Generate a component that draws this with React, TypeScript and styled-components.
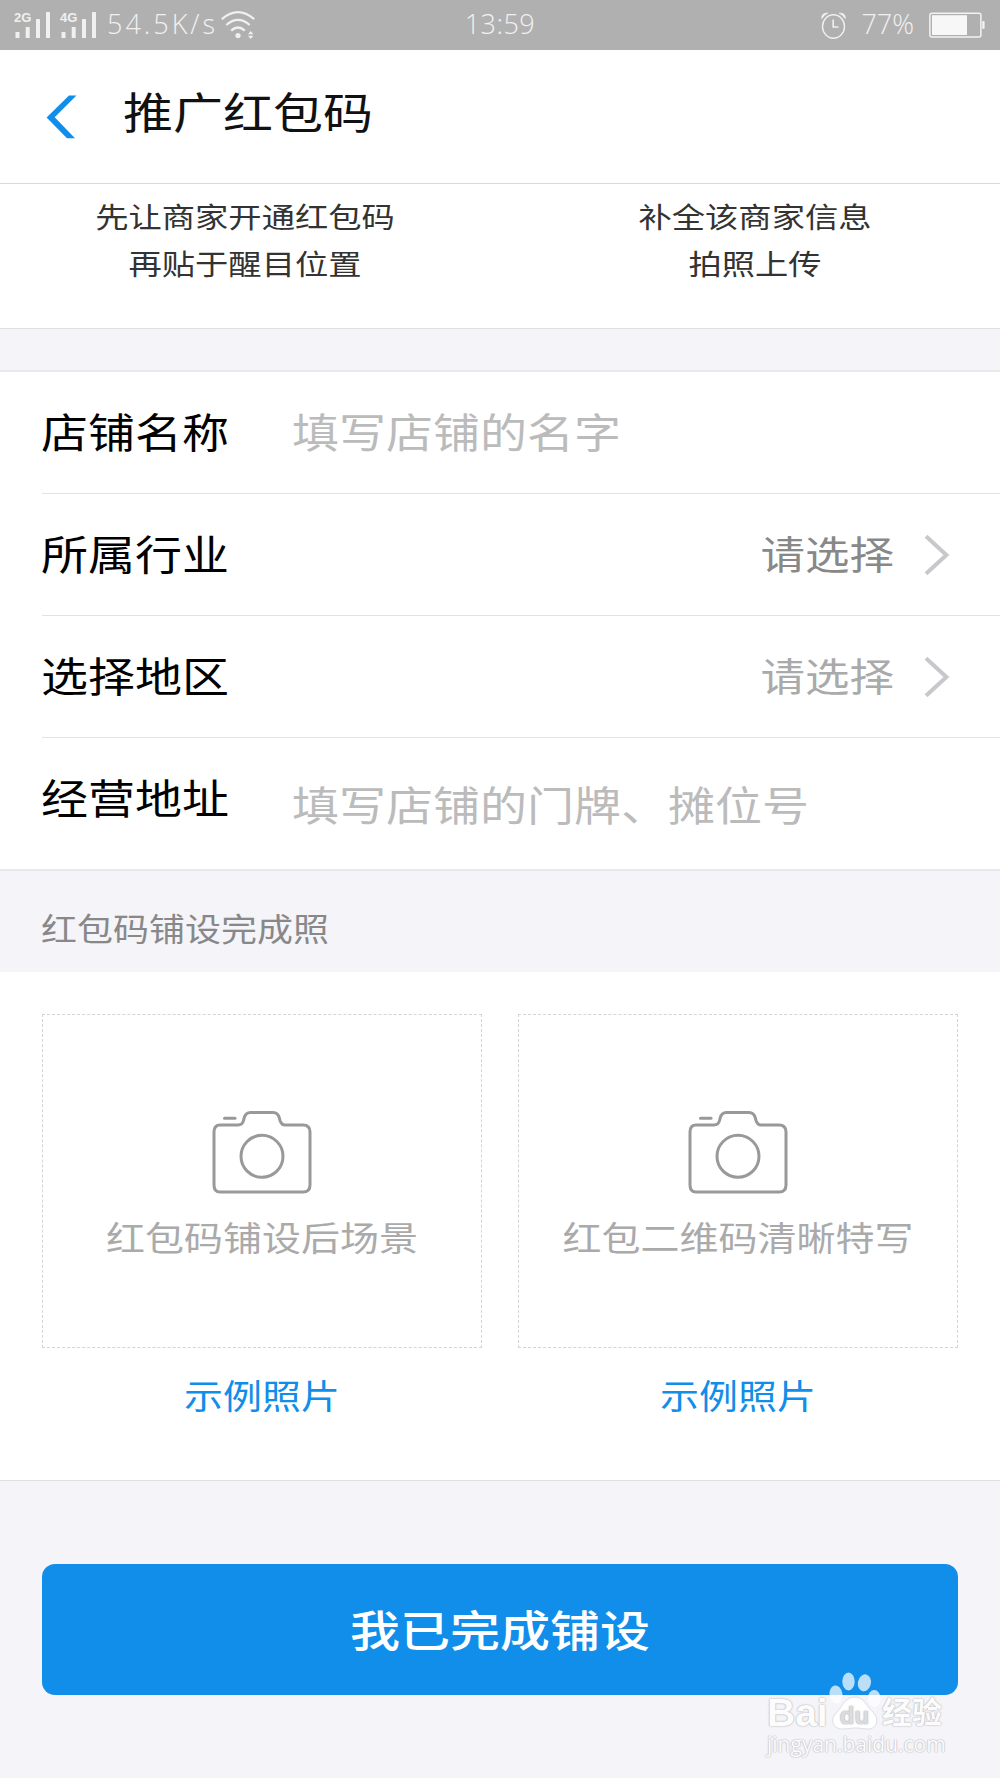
import React from "react";
import styled, { createGlobalStyle } from "styled-components";

const GlobalStyle = createGlobalStyle`
  * { box-sizing: border-box; }
  body {
    margin: 0;
    background: #f4f4f9;
    font-family: "Liberation Sans", "Noto Sans CJK SC", sans-serif;
  }
`;

const Screen = styled.main`
  position: relative;
  width: 1000px;
  height: 1778px;
  overflow: hidden;
  display: flex;
  flex-direction: column;
  background: #f4f4f9;
`;

/* Clerical-style lettering: wide and a little flat. */
const Lettering = styled.span<{ $size: number; $color: string; $weight?: number }>`
  display: block;
  font-family: "Noto Sans CJK SC", sans-serif;
  font-size: ${(p) => p.$size}px;
  line-height: 1;
  color: ${(p) => p.$color};
  font-weight: ${(p) => p.$weight ?? 400};
  white-space: nowrap;
  transform: translateY(-0.04em) scaleY(0.87);
`;

const StatusBar = styled.header`
  height: 50px;
  flex: none;
  display: grid;
  grid-template-columns: 1fr auto 1fr;
  align-items: center;
  padding: 0 15px;
  background: #b0b0b0;
  color: #f0f0f0;
`;

const StatusGroup = styled.div<{ $end?: boolean }>`
  display: flex;
  align-items: center;
  justify-content: ${(p) => (p.$end ? "flex-end" : "flex-start")};
  height: 50px;
`;

const StatusText = styled.span<{ $spacing?: number; $margin?: string }>`
  font-family: "Open Sans", Roboto, sans-serif;
  font-weight: 300;
  font-size: 27px;
  line-height: 48px;
  height: 50px;
  letter-spacing: ${(p) => p.$spacing ?? 0}px;
  margin: ${(p) => p.$margin ?? "0"};
  white-space: nowrap;
`;

const Signal = styled.div`
  position: relative;
  width: 36px;
  height: 26px;
  margin-right: 10px;
`;

const SignalLabel = styled.span`
  position: absolute;
  left: -1px;
  top: -1px;
  font-size: 13px;
  line-height: 13px;
  font-weight: 700;
`;

const NavBar = styled.nav`
  height: 134px;
  flex: none;
  display: flex;
  align-items: center;
  padding: 0 0 10px 46px;
  gap: 46px;
  background: #fff;
  border-bottom: 1px solid #d9d9d9;
`;

const BackButton = styled.button`
  width: 31px;
  height: 44px;
  margin-top: 11px;
  padding: 0;
  border: 0;
  background: none;
`;

const Steps = styled.section`
  height: 145px;
  flex: none;
  display: grid;
  grid-template-columns: 490px 530px;
  padding-top: 10px;
  background: #fff;
  border-bottom: 1px solid #dfdfe1;
`;

const Step = styled.div`
  display: flex;
  flex-direction: column;
  align-items: center;
  gap: 13.4px;
  padding-top: 6px;
`;

const Form = styled.section`
  margin-top: 41px;
  height: 501px;
  flex: none;
  background: #fff;
  border-top: 2px solid #e9e9eb;
  border-bottom: 2px solid #e8e8ea;
  padding-left: 42px;
`;

const Row = styled.div<{ $height: number; $last?: boolean }>`
  height: ${(p) => p.$height}px;
  display: flex;
  align-items: center;
  padding-right: 50px;
  padding-bottom: ${(p) => (p.$last ? 10 : 0)}px;
  border-bottom: ${(p) => (p.$last ? "0" : "1px solid #e2e2e4")};
`;

const Label = styled.div`
  width: 251px;
  margin-left: -1px;
`;

const Hint = styled.div<{ $drop?: number }>`
  padding-top: ${(p) => p.$drop ?? 0}px;
`;

const Picker = styled.div`
  margin-left: auto;
  display: flex;
  align-items: center;
  gap: 30px;
`;

const SectionTitle = styled.h2`
  margin: 0;
  height: 101px;
  flex: none;
  display: flex;
  align-items: center;
  padding: 15px 0 0 41px;
`;

const Photos = styled.section`
  height: 509px;
  flex: none;
  display: grid;
  grid-template-columns: 440px 440px;
  column-gap: 36px;
  padding: 42px 0 0 42px;
  background: #fff;
  border-bottom: 1px solid #dfdfe1;
`;

const Photo = styled.div`
  display: flex;
  flex-direction: column;
  align-items: center;
  gap: 29px;
`;

const DropZone = styled.div`
  width: 440px;
  height: 334px;
  display: flex;
  flex-direction: column;
  align-items: center;
  gap: 25px;
  padding-top: 95px;
  border: 1px dashed #d4d4d8;
`;

const SubmitButton = styled.button`
  margin: 83px 42px 0;
  height: 131px;
  flex: none;
  display: flex;
  align-items: center;
  justify-content: center;
  border: 0;
  border-radius: 13px;
  padding: 0;
  background: #108ee9;
`;

const Watermark = styled.div`
  position: absolute;
  left: 767px;
  top: 1671px;
  width: 182px;
  height: 90px;
  color: #fcfcfd;
  text-shadow: 0 0 2px #b4b4b8, 0 0 1px #b4b4b8;
`;

const Brand = styled.div`
  display: flex;
  align-items: flex-end;
  height: 60px;
`;

const BrandWord = styled.span<{ $size: number; $width: number }>`
  width: ${(p) => p.$width}px;
  font-size: ${(p) => p.$size}px;
  line-height: 36px;
  font-weight: 700;
  white-space: nowrap;
`;

const Site = styled.div`
  font-family: "Open Sans", sans-serif;
  font-size: 21px;
  line-height: 26px;
  white-space: nowrap;
`;

const SignalIcon = ({ label }: { label: string }) => (
  <Signal>
    <svg width="36" height="26" viewBox="0 0 36 26" fill="#f0f0f0">
      <rect x="0.5" y="20" width="4" height="6" rx="0.6" />
      <rect x="10.7" y="15" width="4" height="11" rx="0.6" />
      <rect x="21" y="7" width="4" height="19" rx="0.6" />
      <rect x="31" y="0" width="4" height="26" rx="0.6" />
    </svg>
    <SignalLabel>{label}</SignalLabel>
  </Signal>
);

const WifiIcon = () => (
  <svg width="34" height="28" viewBox="0 0 34 28" fill="none" stroke="#f0f0f0" strokeWidth="2.2">
    <path d="M0.8 8.2Q17-5.8 33.2 8.2" />
    <path d="M5.3 14Q17 3.8 28.7 14" />
    <path d="M10.2 19.6Q17 13.4 23.8 19.6" />
    <circle cx="17" cy="24.5" r="2.6" fill="#f0f0f0" stroke="none" />
    <path d="M27 23.2L29.7 20L32.4 23.2ZM27 24.8L29.7 28L32.4 24.8Z" fill="#f0f0f0" stroke="none" />
  </svg>
);

const AlarmIcon = () => (
  <svg width="25" height="27" viewBox="0 0 25 27" fill="none" stroke="#f0f0f0">
    <ellipse cx="12.5" cy="14.5" rx="11" ry="11.8" strokeWidth="1.4" />
    <path d="M12.2 7.5V15H17.5" strokeWidth="1.6" />
    <path d="M0.8 6.6Q0 1 6.8 1.1Q3 2.7 0.8 6.6ZM24.2 6.6Q25 1 18.2 1.1Q22 2.7 24.2 6.6Z" fill="#f0f0f0" strokeWidth="0.8" />
  </svg>
);

const BatteryIcon = () => (
  <svg width="56" height="26" viewBox="0 0 56 26">
    <rect x="0.9" y="1.2" width="51" height="23.8" rx="2" fill="none" stroke="#f2f2f2" strokeWidth="1.5" />
    <rect x="3" y="3.2" width="35" height="19.8" fill="#f7f7f7" />
    <rect x="53.2" y="9" width="2.4" height="8" rx="1" fill="#f2f2f2" />
  </svg>
);

const BackIcon = () => (
  <svg width="31" height="44" viewBox="0 0 31 44" fill="#108ee9">
    <path d="M23 0.5H30.5L8.7 22.3L29 43.3H21L0.6 22.5Z" />
  </svg>
);

const ChevronIcon = () => (
  <svg width="26" height="42" viewBox="0 0 26 42" fill="none" stroke="#c7c7cc" strokeWidth="4">
    <path d="M2 2.2L22.4 21L2 39.8" />
  </svg>
);

const CameraIcon = () => (
  <svg width="100" height="84" viewBox="0 0 100 84" fill="none" stroke="#999" strokeWidth="3">
    <path d="M8 15H26Q30.5 15 31.5 10.5L32.2 8Q33.5 2.5 38.5 2.5H61Q66 2.5 67.3 8L68 10.5Q69.5 15 73 15H91Q98 15 98 22V75Q98 82 91 82H8Q2 82 2 75V22Q2 15 8 15Z" />
    <circle cx="50" cy="46.3" r="21" />
    <path d="M12.5 8.2H23" strokeLinecap="round" />
  </svg>
);

const PawIcon = () => (
  <svg width="54" height="60" viewBox="0 0 54 60">
    <g fill="#fff" fillOpacity="0.72">
      <ellipse cx="8" cy="23.5" rx="6.5" ry="9" transform="rotate(-8 8 23.5)" />
      <ellipse cx="20.5" cy="10.5" rx="6.2" ry="9" />
      <ellipse cx="36.4" cy="11.8" rx="6.5" ry="8.6" transform="rotate(12 36.4 11.8)" />
      <ellipse cx="46.2" cy="27.5" rx="6.4" ry="8.5" />
    </g>
    <path
      d="M27 26C36 26 38 35 45 41C53 50 47 59 39 58C34 57.5 31 57 27 57C23 57 20 57.8 15 58C6 58.5 1 50 8 42C15 35 17 26 27 26Z"
      fill="#fff"
      stroke="#dedee2"
    />
    <text x="26.5" y="53" textAnchor="middle" fontFamily="Liberation Sans, sans-serif" fontSize="24" fontWeight="700" fill="#dcdce0">
      du
    </text>
  </svg>
);

export default function App() {
  return (
    <>
      <GlobalStyle />
      <Screen>
        <StatusBar>
          <StatusGroup>
            <SignalIcon label="2G" />
            <SignalIcon label="4G" />
            <StatusText $spacing={3} $margin="0 3px 0 0">54.5K/s</StatusText>
            <WifiIcon />
          </StatusGroup>
          <StatusText $spacing={0.5}>13:59</StatusText>
          <StatusGroup $end>
            <AlarmIcon />
            <StatusText $margin="0 15px 0 15px">77%</StatusText>
            <BatteryIcon />
          </StatusGroup>
        </StatusBar>

        <NavBar>
          <BackButton aria-label="back">
            <BackIcon />
          </BackButton>
          <Lettering $size={50} $color="#111">推广红包码</Lettering>
        </NavBar>

        <Steps>
          <Step>
            <Lettering $size={33.3} $color="#333">先让商家开通红包码</Lettering>
            <Lettering $size={33.3} $color="#333">再贴于醒目位置</Lettering>
          </Step>
          <Step>
            <Lettering $size={33.3} $color="#333">补全该商家信息</Lettering>
            <Lettering $size={33.3} $color="#333">拍照上传</Lettering>
          </Step>
        </Steps>

        <Form>
          <Row $height={122}>
            <Label><Lettering $size={47} $color="#000">店铺名称</Lettering></Label>
            <Hint><Lettering $size={47} $color="#bbb">填写店铺的名字</Lettering></Hint>
          </Row>
          <Row $height={122}>
            <Label><Lettering $size={47} $color="#000">所属行业</Lettering></Label>
            <Picker>
              <Lettering $size={44.5} $color="#888">请选择</Lettering>
              <ChevronIcon />
            </Picker>
          </Row>
          <Row $height={122}>
            <Label><Lettering $size={47} $color="#000">选择地区</Lettering></Label>
            <Picker>
              <Lettering $size={44.5} $color="#aaa">请选择</Lettering>
              <ChevronIcon />
            </Picker>
          </Row>
          <Row $height={131} $last>
            <Label><Lettering $size={47} $color="#000">经营地址</Lettering></Label>
            <Hint $drop={13}><Lettering $size={47} $color="#bbb">填写店铺的门牌、摊位号</Lettering></Hint>
          </Row>
        </Form>

        <SectionTitle>
          <Lettering $size={36} $color="#888">红包码铺设完成照</Lettering>
        </SectionTitle>

        <Photos>
          {["红包码铺设后场景", "红包二维码清晰特写"].map((caption) => (
            <Photo key={caption}>
              <DropZone>
                <CameraIcon />
                <Lettering $size={39} $color="#aaa">{caption}</Lettering>
              </DropZone>
              <Lettering $size={39} $color="#108ee9">示例照片</Lettering>
            </Photo>
          ))}
        </Photos>

        <SubmitButton>
          <Lettering $size={50} $color="#fff" $weight={500}>我已完成铺设</Lettering>
        </SubmitButton>

        <Watermark>
          <Brand>
            <BrandWord $size={39} $width={61}>Bai</BrandWord>
            <PawIcon />
            <BrandWord $size={30} $width={62}>经验</BrandWord>
          </Brand>
          <Site>jingyan.baidu.com</Site>
        </Watermark>
      </Screen>
    </>
  );
}
